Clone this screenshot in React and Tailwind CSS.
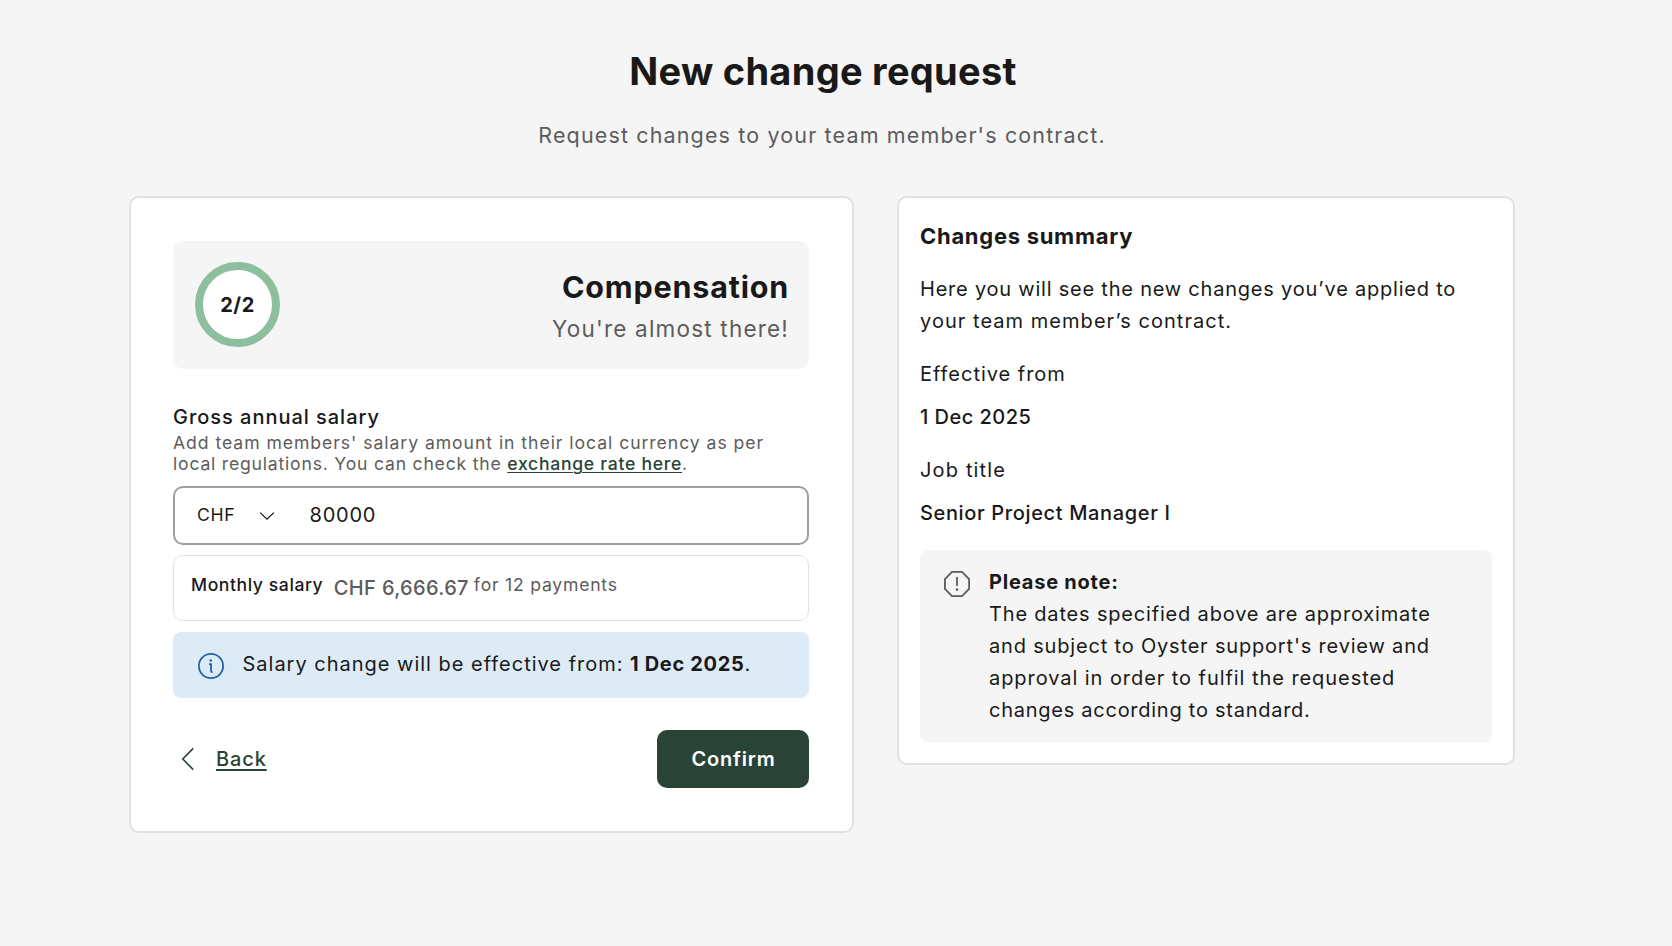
function InfoIcon() {
  return (
    <svg className="h-7 w-7 shrink-0" viewBox="0 0 28 28" fill="none" stroke="#2463a8" strokeWidth="1.8">
      <circle cx="14" cy="14" r="12.1" />
      <path d="M12 12.1h2v6.6q0 1.4 1.4 1.4h.3" />
      <circle cx="13.7" cy="8.5" r="1.3" fill="#2463a8" stroke="none" />
    </svg>
  );
}

function AlertIcon() {
  return (
    <svg className="mt-1 h-7 w-7 shrink-0" viewBox="0 0 28 28" fill="none" stroke="#5c5c5c" strokeWidth="1.8">
      <path d="M9 1.9h10L26.1 9v10L19 26.1H9L1.9 19V9z" />
      <path d="M14 7v9" />
      <circle cx="14" cy="19.6" r="1.3" fill="#5c5c5c" stroke="none" />
    </svg>
  );
}

function Banner() {
  return (
    <div className="flex h-32 items-start justify-between rounded-[10px] bg-[#f5f5f5] px-[22px] pt-[21px]">
      <div className="flex h-[85px] w-[85px] items-center justify-center rounded-full border-8 border-[#8dbe9e] bg-white text-[20px] font-bold tracking-[0.5px]">
        2/2
      </div>
      <div className="mt-[5px] text-right">
        <h2 className="-mr-[2px] text-[30.5px] leading-10 font-bold tracking-[0.8px]">Compensation</h2>
        <p className="-mr-[2px] text-[22.5px] leading-[43px] tracking-[1.2px] text-[#5c5c5c]">You're almost there!</p>
      </div>
    </div>
  );
}

function SalaryForm() {
  return (
    <section className="w-[725px] rounded-[10px] border-2 border-[#e1e1e1] bg-white pt-[43px] pr-[43px] pb-[43px] pl-[42px]">
      <Banner />

      <div className="mt-9 text-[20px] leading-6 font-medium tracking-[0.97px]">Gross annual salary</div>
      <div className="mt-[3px] text-[17.6px] leading-[21px] whitespace-nowrap text-[#5c5c5c]">
        <div className="tracking-[0.95px]">Add team members' salary amount in their local currency as per</div>
        <div className="tracking-[0.79px]">
          local regulations. You can check the{" "}
          <a className="font-medium tracking-[0.72px] text-[#294436] underline decoration-1 underline-offset-2">exchange rate here</a>.
        </div>
      </div>

      <div className="mt-3 flex h-[59px] items-center rounded-[10px] border-2 border-[#9f9f9f] pl-[22px]">
        <span className="w-[62px] text-[17.6px] tracking-[0.7px]">CHF</span>
        <svg className="h-4 w-4" viewBox="0 0 16 16" fill="none" stroke="#191919" strokeWidth="1.3">
          <path d="M1.2 4.6 8 11.2l6.8-6.6" />
        </svg>
        <span className="ml-[34.5px] pb-px text-[20px] tracking-[0.76px]">80000</span>
      </div>

      <div className="mt-2.5 flex h-[66px] items-start rounded-[10px] border border-[#e1e1e1] pt-[17px] pl-[17px] text-[17.6px] leading-6">
        <span className="font-medium tracking-[0.57px]">Monthly salary</span>
        <span className="mt-[3px] ml-[10.5px] text-[20px] font-medium tracking-[0.35px] text-[#5c5c5c]">CHF 6,666.67</span>
        <span className="ml-[5px] tracking-[0.77px] text-[#5c5c5c]">for 12 payments</span>
      </div>

      <div className="mt-[11px] flex h-[66px] items-center rounded-lg bg-[#ddebf6] pl-6">
        <div className="mt-0.5 flex"><InfoIcon /></div>
        <p className="ml-[17.5px] pb-[3px] text-[20px] tracking-[0.99px]">
          Salary change will be effective from: <strong className="font-bold tracking-[0.66px]">1 Dec 2025</strong>.
        </p>
      </div>

      <div className="mt-8 flex h-[58px] items-center justify-between">
        <a className="flex items-center pl-2 text-[#294436]">
          <svg className="h-6 w-[14px]" viewBox="0 0 14 24" fill="none" stroke="#294436" strokeWidth="1.6">
            <path d="M12.2 1.4 1.8 12l10.4 10.6" />
          </svg>
          <span className="ml-[21px] text-[20px] font-medium tracking-[0.87px] underline decoration-2 underline-offset-[3px]">Back</span>
        </a>
        <button className="h-[58px] w-[152px] rounded-[10px] bg-[#294436] pl-px text-[20px] font-semibold tracking-[0.8px] text-white">
          Confirm
        </button>
      </div>
    </section>
  );
}

function ChangesSummary() {
  return (
    <section className="w-[618px] rounded-[10px] border-2 border-[#e1e1e1] bg-white px-[21px] pt-[22px] pb-[21px] text-[20px] leading-8 whitespace-nowrap">
      <h2 className="text-[22px] font-bold tracking-[0.71px]">Changes summary</h2>
      <div className="mt-[21px]">
        <div className="tracking-[0.78px]">Here you will see the new changes you’ve applied to</div>
        <div className="tracking-[1.04px]">your team member’s contract.</div>
      </div>
      <div className="mt-[21px] tracking-[0.97px]">Effective from</div>
      <div className="mt-[11px] font-medium tracking-[0.48px]">1 Dec 2025</div>
      <div className="mt-[21px] tracking-[1.15px]">Job title</div>
      <div className="mt-[11px] font-medium tracking-[0.64px]">Senior Project Manager I</div>
      <div className="mt-[21px] flex rounded-lg bg-[#f5f5f5] py-4 pl-[23px]">
        <AlertIcon />
        <div className="ml-[18px]">
          <div className="font-bold tracking-[0.77px]">Please note:</div>
          <div className="tracking-[0.82px]">The dates specified above are approximate</div>
          <div className="tracking-[0.82px]">and subject to Oyster support's review and</div>
          <div className="tracking-[0.94px]">approval in order to fulfil the requested</div>
          <div className="tracking-[0.74px]">changes according to standard.</div>
        </div>
      </div>
    </section>
  );
}

export default function App() {
  return (
    <main className="min-h-screen bg-[#f5f5f5] pt-[47px] pl-[129px] font-['Inter',sans-serif] text-[#191919]">
      <div className="w-[1386px]">
        <header className="text-center">
          <h1 className="pl-0.5 text-[38px] leading-[48px] font-bold tracking-[0.28px]">New change request</h1>
          <p className="mt-6 text-[21.5px] leading-8 tracking-[1.14px] text-[#5c5c5c]">
            Request changes to your team member's contract.
          </p>
        </header>
        <div className="mt-[45px] flex items-start justify-between">
          <SalaryForm />
          <ChangesSummary />
        </div>
      </div>
    </main>
  );
}
